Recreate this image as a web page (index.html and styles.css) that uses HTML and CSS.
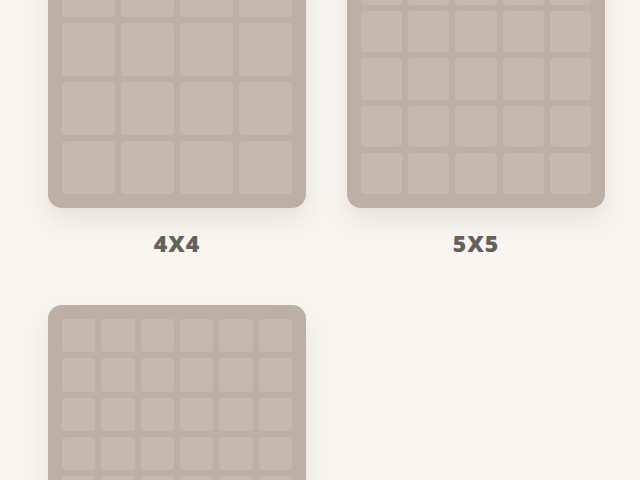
FILE: index.html
```html
<!DOCTYPE html>
<html>
<head>
    <title>Elegir tablero</title>
    <link rel="stylesheet" href="styles.css">
</head>
<body>
    <div class="board-list">
        <div class="board-option">
            <div class="board size-4">
                <div class="cell"></div><div class="cell"></div><div class="cell"></div><div class="cell"></div>
                <div class="cell"></div><div class="cell"></div><div class="cell"></div><div class="cell"></div>
                <div class="cell"></div><div class="cell"></div><div class="cell"></div><div class="cell"></div>
                <div class="cell"></div><div class="cell"></div><div class="cell"></div><div class="cell"></div>
            </div>
            <div class="board-label">4X4</div>
        </div>

        <div class="board-option">
            <div class="board size-5" id="board5"></div>
            <div class="board-label">5X5</div>
        </div>

        <div class="board-option">
            <div class="board size-6" id="board6"></div>
            <div class="board-label">6X6</div>
        </div>
    </div>

    <script>
        // Fill the bigger boards with empty cells
        function fillBoard(id, size) {
            const board = document.getElementById(id);
            for (let i = 0; i < size * size; i++) {
                const cell = document.createElement("div");
                cell.classList.add("cell");
                board.appendChild(cell);
            }
        }

        fillBoard("board5", 5);
        fillBoard("board6", 6);
    </script>
</body>
</html>
```

FILE: styles.css
```css
html, body {
    margin: 0;
    padding: 0;
    background-color: #f9f6f1;
    font-family: "Open Sans", "Liberation Sans", sans-serif;
    overflow: hidden;
}

.board-list {
    display: grid;
    grid-template-columns: 258px 258px;
    column-gap: 41px;
    row-gap: 47px;
    padding-left: 48px;
    margin-top: -50px;
}

.board-option {
    display: flex;
    flex-direction: column;
    align-items: center;
}

.board {
    width: 258px;
    height: 258px;
    box-sizing: border-box;
    padding: 14px;
    display: grid;
    gap: 6px;
    background-color: #bdafa3;
    border-radius: 14px;
    box-shadow: 0 12px 26px rgba(90, 70, 50, 0.12);
}

.size-4 {
    grid-template-columns: repeat(4, 1fr);
    grid-template-rows: repeat(4, 1fr);
}

.size-5 {
    grid-template-columns: repeat(5, 1fr);
    grid-template-rows: repeat(5, 1fr);
}

.size-6 {
    grid-template-columns: repeat(6, 1fr);
    grid-template-rows: repeat(6, 1fr);
}

.cell {
    background-color: #c5b9ad;
    border-radius: 4px;
}

.board-label {
    margin-top: 20px;
    font-size: 23px;
    line-height: 30px;
    font-weight: 800;
    letter-spacing: 1px;
    color: #66615d;
}
```
